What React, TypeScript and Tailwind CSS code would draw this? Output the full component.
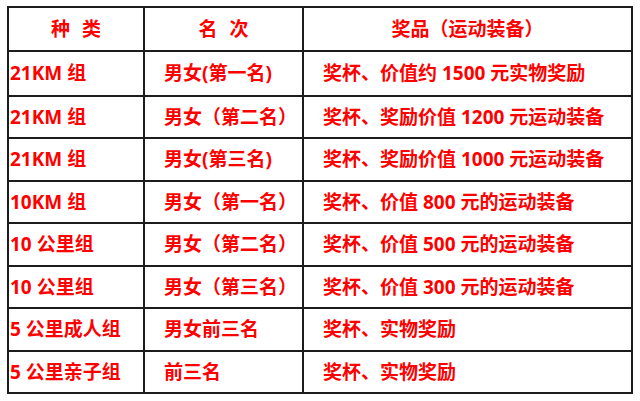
import React from 'react';

const rows = [
  { kind: '21KM 组', rank: '男女(第一名)', prize: '奖杯、价值约 1500 元实物奖励', h: 'h-[45px]' },
  { kind: '21KM 组', rank: '男女（第二名）', prize: '奖杯、奖励价值 1200 元运动装备', h: 'h-[42px]' },
  { kind: '21KM 组', rank: '男女(第三名)', prize: '奖杯、奖励价值 1000 元运动装备', h: 'h-[43px]' },
  { kind: '10KM 组', rank: '男女（第一名）', prize: '奖杯、价值 800 元的运动装备', h: 'h-[42px]' },
  { kind: '10 公里组', rank: '男女（第二名）', prize: '奖杯、价值 500 元的运动装备', h: 'h-[43px]' },
  { kind: '10 公里组', rank: '男女（第三名）', prize: '奖杯、价值 300 元的运动装备', h: 'h-[42px]' },
  { kind: '5 公里成人组', rank: '男女前三名', prize: '奖杯、实物奖励', h: 'h-[43px]' },
  { kind: '5 公里亲子组', rank: '前三名', prize: '奖杯、实物奖励', h: 'h-[42px]' },
];

const cell = 'border-2 border-[#1c1c1c] p-0 align-middle';

export default function App() {
  return (
    <div
      className="w-[640px] h-[401px] bg-white pl-[7px] pt-[6px]"
      style={{ fontFamily: '"Noto Sans", "Noto Sans CJK SC", sans-serif' }}
    >
      <table className="border-collapse w-[624px] table-fixed text-[19px] font-bold text-[#ff0000] leading-none">
        <colgroup>
          <col className="w-[136px]" />
          <col className="w-[159px]" />
          <col className="w-[329px]" />
        </colgroup>
        <thead>
          <tr className="h-[44px]">
            <th className={`${cell} text-center`}>
              <span className="inline-flex gap-[12px]"><span>种</span><span>类</span></span>
            </th>
            <th className={`${cell} text-center`}>
              <span className="inline-flex gap-[12px]"><span>名</span><span>次</span></span>
            </th>
            <th className={`${cell} text-center`}>奖品（运动装备）</th>
          </tr>
        </thead>
        <tbody>
          {rows.map((r, i) => (
            <tr key={i} className={r.h}>
              <td className={`${cell} pl-[1px] whitespace-nowrap`}>{r.kind}</td>
              <td className={`${cell} pl-[19px] whitespace-nowrap`}>{r.rank}</td>
              <td className={`${cell} pl-[19px] whitespace-nowrap`}>{r.prize}</td>
            </tr>
          ))}
        </tbody>
      </table>
    </div>
  );
}
